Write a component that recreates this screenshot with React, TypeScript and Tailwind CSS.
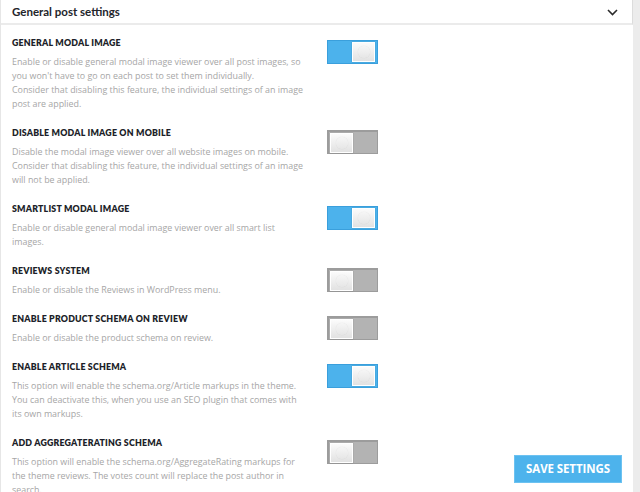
import React from "react";

type Setting = {
  title: string;
  lines: string[];
  on: boolean;
};

const settings: Setting[] = [
  {
    title: "General modal image",
    lines: [
      "Enable or disable general modal image viewer over all post images, so",
      "you won't have to go on each post to set them individually.",
      "Consider that disabling this feature, the individual settings of an image",
      "post are applied.",
    ],
    on: true,
  },
  {
    title: "Disable modal image on mobile",
    lines: [
      "Disable the modal image viewer over all website images on mobile.",
      "Consider that disabling this feature, the individual settings of an image",
      "will not be applied.",
    ],
    on: false,
  },
  {
    title: "Smartlist modal image",
    lines: [
      "Enable or disable general modal image viewer over all smart list",
      "images.",
    ],
    on: true,
  },
  {
    title: "Reviews system",
    lines: ["Enable or disable the Reviews in WordPress menu."],
    on: false,
  },
  {
    title: "Enable product schema on review",
    lines: ["Enable or disable the product schema on review."],
    on: false,
  },
  {
    title: "Enable article schema",
    lines: [
      "This option will enable the schema.org/Article markups in the theme.",
      "You can deactivate this, when you use an SEO plugin that comes with",
      "its own markups.",
    ],
    on: true,
  },
  {
    title: "Add aggregaterating schema",
    lines: [
      "This option will enable the schema.org/AggregateRating markups for",
      "the theme reviews. The votes count will replace the post author in",
      "search.",
    ],
    on: false,
  },
];

function Thumb() {
  return (
    <div className="w-[23px] h-[20px] bg-white p-[1px] shadow-[0_0_1px_rgba(0,0,0,0.25)]">
      <div className="w-full h-full bg-gradient-to-b from-[#fbfbfb] to-[#e2e2e2] flex items-center justify-center">
        <div className="w-[12px] h-[12px] rounded-full bg-gradient-to-b from-[#f6f6f6] to-[#e6e6e6] shadow-[0_0_1px_rgba(0,0,0,0.15)]" />
      </div>
    </div>
  );
}

function Toggle({ on }: { on: boolean }) {
  return on ? (
    <div className="w-[51px] h-[24px] bg-[#4cb2ec] border border-[#3a9fdc] flex items-center justify-end pr-[2px]">
      <Thumb />
    </div>
  ) : (
    <div className="w-[51px] h-[24px] bg-[#b3b3b3] border border-[#9c9c9c] border-l-2 border-t-2 flex items-center justify-start pl-[1px]">
      <Thumb />
    </div>
  );
}

export default function App() {
  return (
    <div className="w-[640px] h-[492px] bg-[#ececec] overflow-hidden relative font-['Open_Sans',sans-serif]">
      <div className="w-[633px] h-full bg-white border-l border-[#e6e6e6]">
        <div className="h-[25px] flex items-center justify-between pl-[11px] pr-[14px] border-b-2 border-[#ebebeb] border-r border-r-[#dcdcdc]">
          <span className="font-['Lato',sans-serif] font-bold text-[11.5px] text-[#23252b]">
            General post settings
          </span>
          <svg width="11" height="7" viewBox="0 0 11 7" className="mt-[1px]">
            <path d="M1 1l4.5 4.5L10 1" fill="none" stroke="#2b2b2b" strokeWidth="1.6" />
          </svg>
        </div>
        <div className="flex flex-col pt-[3px]">
          {settings.map((s) => (
            <div key={s.title} className="flex pl-[11px] pt-[8px] pb-[7px]">
              <div className="w-[315px] shrink-0">
                <div className="h-[14px] leading-[14px] mb-[5px] font-['Lato',sans-serif] font-extrabold uppercase text-[8.8px] tracking-[0.2px] text-[#1d1f2a]">
                  {s.title}
                </div>
                <div className="text-[8.9px] leading-[14px] text-[#a6a6a6] whitespace-nowrap">
                  {s.lines.map((l, i) => (
                    <div key={i}>{l}</div>
                  ))}
                </div>
              </div>
              <div className="pt-[4px]">
                <Toggle on={s.on} />
              </div>
            </div>
          ))}
        </div>
      </div>
      <button className="absolute left-[514px] top-[455px] w-[108px] h-[28px] bg-[#4db3ec] border border-[#6cc2f1] text-white font-bold text-[11.5px] tracking-[-0.1px]">
        SAVE SETTINGS
      </button>
    </div>
  );
}
